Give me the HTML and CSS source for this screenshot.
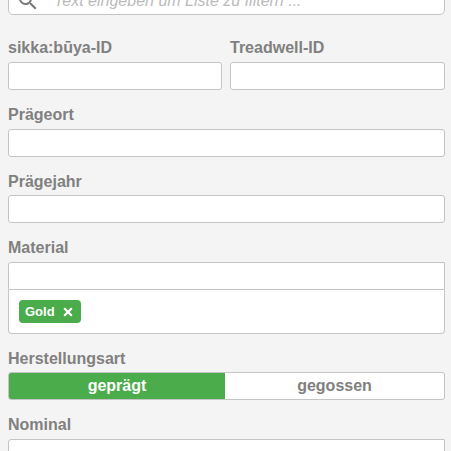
FILE: index.html
```
<!DOCTYPE html>
<html lang="de">
<head>
<meta charset="utf-8">
<title>Filter</title>
<link rel="stylesheet" href="styles.css">
</head>
<body>
<main class="filters">
  <div class="search">
    <svg class="search-icon" viewBox="0 0 24 24"><path d="M15.5 14h-.79l-.28-.27A6.47 6.47 0 0 0 16 9.5 6.5 6.5 0 1 0 9.5 16c1.61 0 3.09-.59 4.23-1.57l.27.28v.79l5 4.99L20.49 19l-4.99-5zm-6 0A4.5 4.5 0 1 1 9.5 5a4.5 4.5 0 0 1 0 9z"/></svg>
    <span class="placeholder">Text eingeben um Liste zu filtern ...</span>
  </div>
  <div class="row">
    <div class="field"><label class="label">sikka:būya-ID</label><div class="input"></div></div>
    <div class="field"><label class="label">Treadwell-ID</label><div class="input"></div></div>
  </div>
  <div class="field"><label class="label">Prägeort</label><div class="input"></div></div>
  <div class="field"><label class="label label-tight">Prägejahr</label><div class="input"></div></div>
  <div class="field"><label class="label">Material</label>
    <div class="input input-top"></div>
    <div class="tags"><span class="tag">Gold<svg class="close" viewBox="0 0 10 10"><path d="M1.2 1.2l7.6 7.6M8.8 1.2l-7.6 7.6"/></svg></span></div>
  </div>
  <div class="field"><label class="label label-tight">Herstellungsart</label>
    <div class="toggle"><span class="option active">geprägt</span><span class="option">gegossen</span></div>
  </div>
  <div class="field"><label class="label">Nominal</label><div class="input input-top"></div></div>
</main>
</body>
</html>
```
FILE: styles.css
```
* { box-sizing: border-box; }
html { overflow: hidden; }
body {
  margin: 0;
  height: 451px;
  overflow: hidden;
  background: #f4f4f4;
  color: #808080;
  font: bold 16px/20px "Liberation Sans", Arial, sans-serif;
}
.filters { width: 437px; margin-left: 8px; }
.search {
  display: flex;
  height: 36px;
  margin-top: -21px;
  margin-bottom: 23px;
  padding-left: 7px;
  align-items: center;
  background: #fff;
  border: 1px solid #c4c4c4;
  border-radius: 5px;
}
.search-icon { width: 24px; height: 24px; fill: #777; margin-top: 7px; }
.placeholder { margin: 7px 0 0 14px; color: #bbb; font-weight: normal; font-style: italic; }
.row { display: grid; grid-template-columns: 214px 215px; gap: 8px; }
.field { margin-bottom: 15px; }
.label { display: block; height: 24px; line-height: 20px; }
.label-tight { height: 23px; }
.input { height: 28px; background: #fff; border: 1px solid #c4c4c4; border-radius: 3px; }
.input-top { border-radius: 3px 1px 0 0; }
.tags {
  height: 44px;
  padding: 10px;
  background: #fff;
  border: 1px solid #c4c4c4;
  border-top: 0;
  border-radius: 0 0 4px 4px;
}
.tag {
  display: flex;
  width: 62px;
  height: 23px;
  padding: 0 8px 0 6px;
  align-items: center;
  justify-content: space-between;
  border-radius: 4px;
  background: #4aac4a;
  color: #fff;
  font-size: 13px;
}
.close { width: 10px; height: 10px; fill: none; stroke: #fff; stroke-width: 2.2; }
.toggle {
  display: grid;
  grid-template-columns: 216px 1fr;
  height: 28px;
  overflow: hidden;
  background: #fff;
  border: 1px solid #c4c4c4;
  border-radius: 3px;
}
.option { text-align: center; line-height: 26px; }
.active { background: #4aac4a; color: #fff; }
```
